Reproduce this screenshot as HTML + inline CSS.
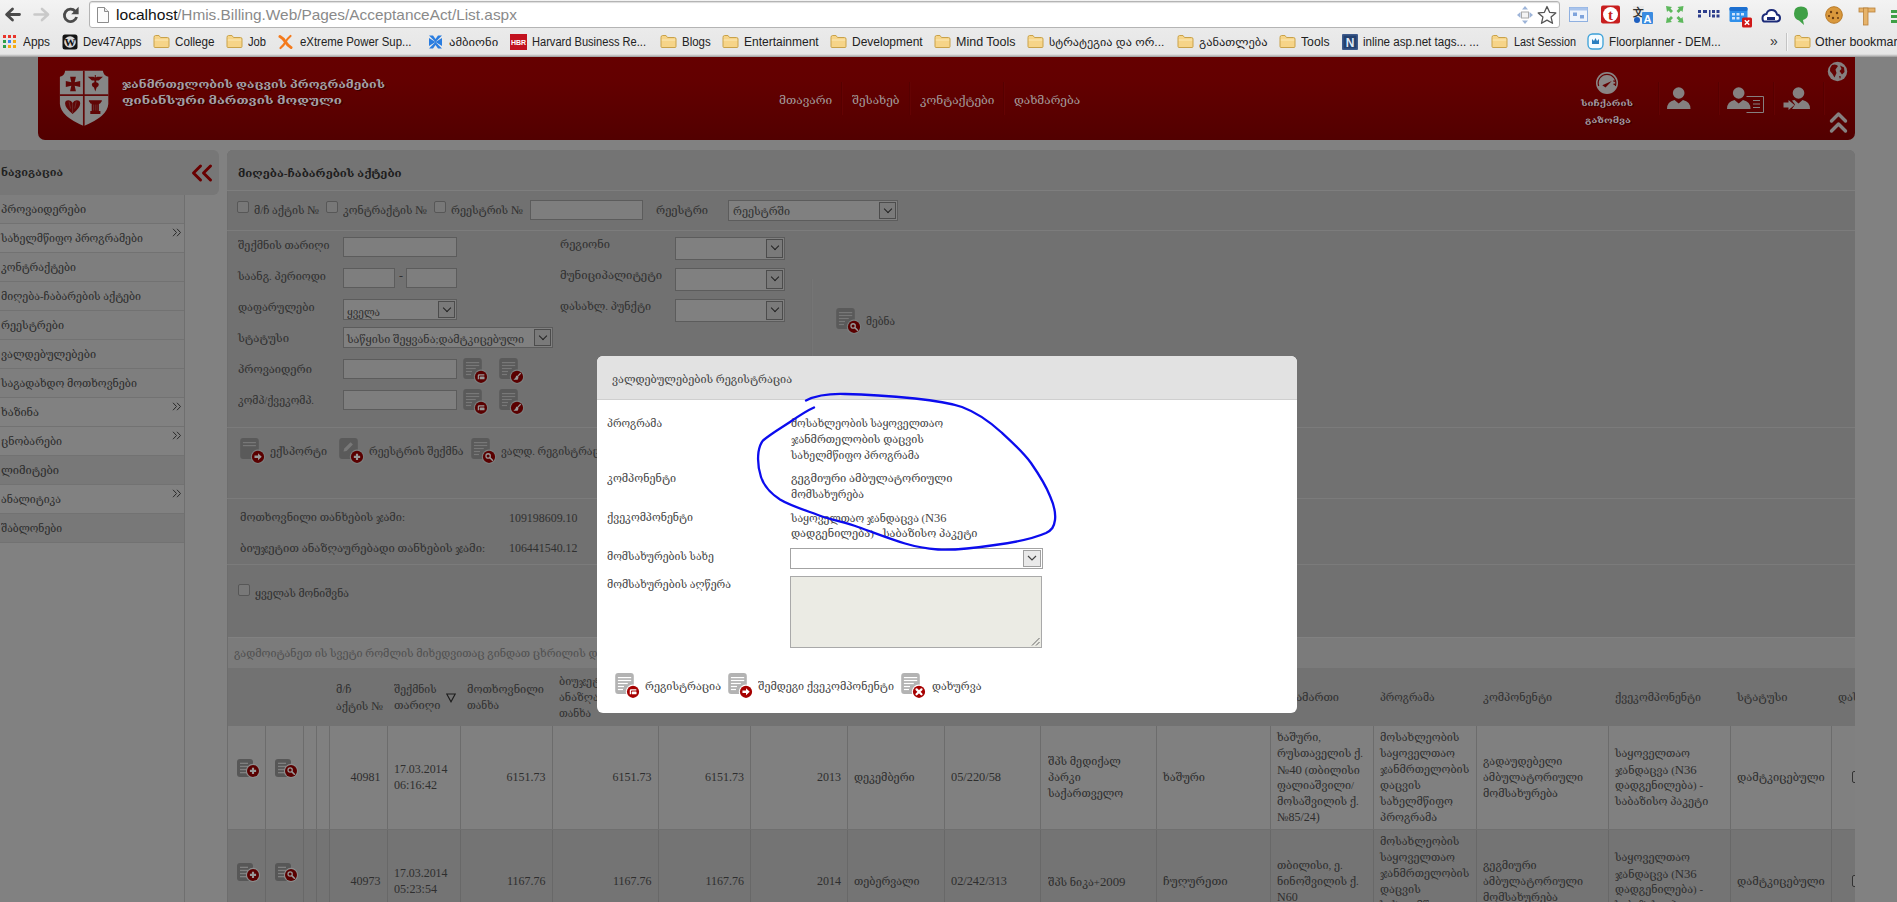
<!DOCTYPE html>
<html lang="ka">
<head>
<meta charset="utf-8">
<title>მიღება-ჩაბარების აქტები</title>
<style>
*{box-sizing:border-box}
html,body{margin:0;padding:0}
body{width:1897px;height:902px;overflow:hidden;position:relative;background:#818181;
 font-family:"Liberation Serif","DejaVu Serif",serif;font-size:12px;color:#303030}
.a{position:absolute}
.t{position:absolute;white-space:nowrap;line-height:16px;height:16px;transform-origin:0 0}
.ui{font-family:"Liberation Sans","DejaVu Sans",sans-serif}
.r{text-align:right}
.b{font-weight:bold}
#chrome{left:0;top:0;width:1897px;height:57px;background:linear-gradient(#f3f3f3 0,#ebebeb 26px,#e6e6e6 54px,#d0d0d0 55px,#9a9a9a 57px)}
#addr{left:89px;top:1px;width:1471px;height:27px;background:#fff;border:1px solid #b4b4b4;border-radius:3px;box-shadow:inset 0 1px 1px #ddd}
.bm{color:#222}
#hdr{left:38px;top:57px;width:1817px;height:83px;background:linear-gradient(#650000,#630000 30%,#520000);border-radius:0 0 7px 7px}
.hm{color:#a39b9b;font-size:13px}
.hd{width:1px;background:#560000;box-shadow:1px 0 0 #640303}
#navh{left:0;top:150px;width:219px;height:45px;background:#777;border-radius:0 6px 6px 0}
#navl{left:0;top:195px;width:185px;height:707px;border-right:1px solid #6f6f6f}
.ni{position:absolute;left:0;width:184px;height:29px;border-bottom:1px solid #727272}
#main{left:227px;top:150px;width:1628px;height:760px;background:#717171;border-radius:6px 6px 0 0;border-left:1px solid #6d6d6d}
.sep{position:absolute;left:227px;width:1628px;height:1px;background:#7b7b7b}
.in{position:absolute;border:1px solid #5c5c5c;background:#7e7e7e}
.sel{position:absolute;border:1px solid #5c5c5c;background:#808080}
.sel i{position:absolute;right:1px;top:1px;bottom:1px;width:17px;border:1px solid #4c4c4c;background:#7a7a7a}
.sel i:after{content:"";position:absolute;left:5px;top:3px;width:5px;height:5px;border-right:1px solid #222;border-bottom:1px solid #222;transform:rotate(45deg)}
.cb{position:absolute;width:12px;height:12px;border:1px solid #575757;border-radius:2px;background:#787878}
.vl{position:absolute;width:1px;background:#727272}
#modal{left:597px;top:356px;width:700px;height:357px;background:#fff;border-radius:6px;overflow:hidden}
#mh{left:0;top:0;width:700px;height:44px;background:#e2e2e2;border-bottom:1px solid #cfcfcf}
.m{color:#3a3a3a}
</style>
</head>
<body>
<div id="chrome" class="a"></div>
<svg class="a" style="left:4px;top:6px" width="80" height="18" viewBox="0 0 80 18"><path d="M15.5 8.5H3.5M8.5 3L2.6 8.5L8.5 14" fill="none" stroke="#4a4a4a" stroke-width="2.8" stroke-linecap="round" stroke-linejoin="round"/><path d="M30.5 8.5H43M38 3L44 8.5L38 14" fill="none" stroke="#c9c9c9" stroke-width="2.6" stroke-linecap="round" stroke-linejoin="round"/><path d="M71.2 5.2A6.2 6.2 0 1 0 72.6 11" fill="none" stroke="#4a4a4a" stroke-width="2.8"/><path d="M74.6 0.8V8.2H67.2Z" fill="#4a4a4a"/></svg>
<div id="addr" class="a"></div>
<svg class="a" style="left:97px;top:7px" width="12" height="16" viewBox="0 0 12 16"><path d="M.5 .5H7.5L11.5 4.5V15.5H.5Z" fill="#fcfcfc" stroke="#8c8c8c"/><path d="M7.5 .5V4.5H11.5" fill="#e8e8e8" stroke="#8c8c8c"/></svg>
<span class="t ui" style="left:115.5px;top:6px;font-size:15px;color:#111;line-height:18px;height:18px;transform:scaleX(1.039)">localhost</span>
<span class="t ui" style="left:177px;top:6px;font-size:15px;color:#8a8a8a;line-height:18px;height:18px;transform:scaleX(1.025)">/Hmis.Billing.Web/Pages/AcceptanceAct/List.aspx</span>
<svg class="a" style="left:1516px;top:5px" width="42" height="20" viewBox="0 0 42 20"><g fill="#9db4d8"><path d="M9 1L12 4.5H6Z"/><path d="M9 19L12 15.5H6Z"/><path d="M1 10L4.5 7V13Z"/><path d="M17 10L13.500 7V13Z"/></g><rect x="5.500" y="7" width="7" height="6" fill="#f4f4f4" stroke="#aaa"/><path d="M31 1.500L33.600 7.300L39.800 7.900L35.100 12.100L36.500 18.300L31 15.100L25.500 18.300L26.900 12.100L22.200 7.900L28.400 7.300Z" fill="#fdfdfd" stroke="#555" stroke-width="1.300" stroke-linejoin="round"/></svg>
<svg class="a" style="left:1566px;top:3px" width="331" height="26" viewBox="0 0 331 26"><rect x="3.500" y="4.500" width="18" height="14" fill="#eef3fb" stroke="#8fb0e0"/><rect x="3.500" y="4.500" width="18" height="3" fill="#a9c4ec"/><rect x="7" y="9.500" width="4" height="3.500" fill="#7ea3dc"/><rect x="14" y="12" width="4" height="3.500" fill="#7ea3dc"/><rect x="35" y="2.500" width="19" height="18" rx="2" fill="#c81e1e"/><circle cx="44.500" cy="11.500" r="7.500" fill="#fff"/><text x="44.500" y="16.500" font-family="Liberation Serif,serif" font-size="15" font-weight="bold" fill="#c81e1e" text-anchor="middle">t</text><rect x="67" y="3" width="11" height="12" fill="#e8e8e8"/><text x="72.500" y="13" font-family="Liberation Sans,sans-serif" font-size="11" font-weight="bold" fill="#333" text-anchor="middle">文</text><rect x="76" y="9" width="11" height="12" rx="1" fill="#3a8be0"/><text x="81.500" y="19.500" font-family="Liberation Sans,sans-serif" font-size="11" font-weight="bold" fill="#fff" text-anchor="middle">A</text><circle cx="71" cy="17" r="3" fill="#1e5fc0"/><g fill="#5db85c"><path d="M100 3L106 4L104.500 5.500L107 8L105 10L102.500 7.500L101 9Z"/><path d="M117.500 3L116.500 9L115 7.500L112.500 10L110.500 8L113 5.500L111.500 4Z"/><path d="M100 20L101 14L102.500 15.500L105 13L107 15L104.500 17.500L106 19Z"/><path d="M117.500 20L111.500 19L113 17.500L110.500 15L112.500 13L115 15.500L116.500 14Z"/></g><g fill="#2d3e8c"><rect x="132" y="7" width="3" height="3"/><rect x="137" y="7" width="4" height="3"/><rect x="143" y="7" width="1.500" height="7"/><rect x="146" y="7" width="3" height="3"/><rect x="150.500" y="7" width="3" height="3"/><rect x="132" y="11.500" width="3" height="3"/><rect x="146" y="11.500" width="3" height="3"/><rect x="150.500" y="11.500" width="3" height="3"/></g><rect x="163.500" y="4" width="18" height="15" rx="1.500" fill="#2f8fea"/><rect x="163.500" y="4" width="18" height="4" rx="1.500" fill="#1c6fd0"/><g fill="#cfe4fb"><rect x="166" y="10" width="3" height="2.500"/><rect x="170.500" y="10" width="3" height="2.500"/><rect x="175" y="10" width="3" height="2.500"/><rect x="166" y="14" width="3" height="2.500"/><rect x="170.500" y="14" width="3" height="2.500"/></g><rect x="176" y="14.500" width="10" height="10" rx="1.500" fill="#d01818"/><path d="M178.800 17.300L183.200 21.700M183.200 17.300L178.800 21.700" stroke="#fff" stroke-width="1.600"/><path d="M198 18.500H211Q214 18 214 15Q214 12 211 11.500Q210 7 205.500 7Q201.500 7 200.500 11Q196.500 11.500 196.500 15Q196.500 18 198 18.500Z" fill="#fff" stroke="#1b2a78" stroke-width="2"/><rect x="201" y="14" width="8" height="3" fill="#1b2a78"/><path d="M235 3.500Q242 3.500 242 10.500Q242 15.500 237 17L238 22L233 17.500Q228 16 228 10.500Q228 3.500 235 3.500Z" fill="#3fa046"/><circle cx="268" cy="12" r="8.300" fill="#d9983c"/><circle cx="268" cy="12" r="8.300" fill="none" stroke="#b87824" stroke-width="1"/><g fill="#6b3d12"><circle cx="265" cy="9" r="1.200"/><circle cx="271" cy="10" r="1.200"/><circle cx="267" cy="15" r="1.200"/><circle cx="272" cy="15" r="1"/><circle cx="263" cy="13" r="1"/></g><rect x="293" y="5" width="16" height="4" fill="#e6b36a" stroke="#b8803a" stroke-width=".8"/><rect x="297.500" y="5" width="4.500" height="17" fill="#e6b36a" stroke="#b8803a" stroke-width=".8"/><rect x="325" y="7" width="8" height="3" fill="#3fa046"/><rect x="325" y="12" width="8" height="3" fill="#3fa046"/><rect x="325" y="17" width="8" height="3" fill="#3fa046"/></svg>
<svg class="a" style="left:3px;top:35px" width="13" height="13" viewBox="0 0 13 13"><rect x="0" y="0" width="3" height="3" fill="#e8352b"/><rect x="5" y="0" width="3" height="3" fill="#e8352b"/><rect x="10" y="0" width="3" height="3" fill="#e8352b"/><rect x="0" y="5" width="3" height="3" fill="#2ea04a"/><rect x="5" y="5" width="3" height="3" fill="#3b86f2"/><rect x="10" y="5" width="3" height="3" fill="#f4ab12"/><rect x="0" y="10" width="3" height="3" fill="#2ea04a"/><rect x="5" y="10" width="3" height="3" fill="#f4ab12"/><rect x="10" y="10" width="3" height="3" fill="#f4ab12"/></svg>
<span class="t ui bm" style="left:23.3px;top:34px;color:#222;transform:scaleX(0.987)">Apps</span>
<svg class="a" style="left:62px;top:34px" width="16" height="16" viewBox="0 0 16 16"><rect x=".5" y=".5" width="15" height="15" rx="2.500" fill="#141414"/><circle cx="8" cy="8" r="5.800" fill="#d8d8d8"/><text x="8" y="12" font-family="Liberation Serif,serif" font-size="11" font-weight="bold" fill="#141414" text-anchor="middle">W</text></svg>
<span class="t ui bm" style="left:83.3px;top:34px;color:#222;transform:scaleX(0.941)">Dev47Apps</span>
<svg class="a" style="left:153px;top:34px" width="17" height="15" viewBox="0 0 17 15"><path d="M1 3.500Q1 1.500 2.500 1.500H6L7.500 3.500H14.500Q16 3.500 16 5V12.500Q16 13.500 15 13.500H2Q1 13.500 1 12.500Z" fill="#f6d488" stroke="#c9a24a" stroke-width="1"/><path d="M1.800 6H15.200" stroke="#fbe9b8" stroke-width="1"/></svg>
<span class="t ui bm" style="left:175.4px;top:34px;color:#222;transform:scaleX(0.973)">College</span>
<svg class="a" style="left:226px;top:34px" width="17" height="15" viewBox="0 0 17 15"><path d="M1 3.500Q1 1.500 2.500 1.500H6L7.500 3.500H14.500Q16 3.500 16 5V12.500Q16 13.500 15 13.500H2Q1 13.500 1 12.500Z" fill="#f6d488" stroke="#c9a24a" stroke-width="1"/><path d="M1.800 6H15.200" stroke="#fbe9b8" stroke-width="1"/></svg>
<span class="t ui bm" style="left:248px;top:34px;color:#222;transform:scaleX(0.930)">Job</span>
<svg class="a" style="left:278px;top:34px" width="15" height="16" viewBox="0 0 15 16"><path d="M2 2.500Q5 4 7.500 8Q10 12 13 13.500" fill="none" stroke="#f47a1c" stroke-width="3" stroke-linecap="round"/><path d="M12.500 2Q9 5 7.500 8Q6 11 2.500 14" fill="none" stroke="#f47a1c" stroke-width="2.200" stroke-linecap="round"/></svg>
<span class="t ui bm" style="left:299.6px;top:34px;color:#222;transform:scaleX(0.950)">eXtreme Power Sup...</span>
<svg class="a" style="left:428px;top:34px" width="15" height="16" viewBox="0 0 15 16"><path d="M7.500 8L1 1.500H5L7.500 5L10 1.500H14ZM7.500 8L14 14.500H10L7.500 11L5 14.500H1ZM7.500 8L1 4V12ZM7.500 8L14 4V12Z" fill="#2a7de0"/></svg>
<span class="t ui bm" style="left:449.4px;top:34px;font-size:11px;color:#222;transform:scaleX(1.149)">ამბიონი</span>
<svg class="a" style="left:510px;top:34px" width="17" height="16" viewBox="0 0 17 16"><rect width="17" height="16" fill="#c2121f"/><text x="8.500" y="11" font-family="Liberation Sans,sans-serif" font-size="7" font-weight="bold" fill="#fff" text-anchor="middle">HBR</text></svg>
<span class="t ui bm" style="left:532.4px;top:34px;color:#222;transform:scaleX(0.924)">Harvard Business Re...</span>
<svg class="a" style="left:660px;top:34px" width="17" height="15" viewBox="0 0 17 15"><path d="M1 3.500Q1 1.500 2.500 1.500H6L7.500 3.500H14.500Q16 3.500 16 5V12.500Q16 13.500 15 13.500H2Q1 13.500 1 12.500Z" fill="#f6d488" stroke="#c9a24a" stroke-width="1"/><path d="M1.800 6H15.200" stroke="#fbe9b8" stroke-width="1"/></svg>
<span class="t ui bm" style="left:682.2px;top:34px;color:#222;transform:scaleX(0.956)">Blogs</span>
<svg class="a" style="left:722px;top:34px" width="17" height="15" viewBox="0 0 17 15"><path d="M1 3.500Q1 1.500 2.500 1.500H6L7.500 3.500H14.500Q16 3.500 16 5V12.500Q16 13.500 15 13.500H2Q1 13.500 1 12.500Z" fill="#f6d488" stroke="#c9a24a" stroke-width="1"/><path d="M1.800 6H15.200" stroke="#fbe9b8" stroke-width="1"/></svg>
<span class="t ui bm" style="left:744px;top:34px;color:#222">Entertainment</span>
<svg class="a" style="left:830px;top:34px" width="17" height="15" viewBox="0 0 17 15"><path d="M1 3.500Q1 1.500 2.500 1.500H6L7.500 3.500H14.500Q16 3.500 16 5V12.500Q16 13.500 15 13.500H2Q1 13.500 1 12.500Z" fill="#f6d488" stroke="#c9a24a" stroke-width="1"/><path d="M1.800 6H15.200" stroke="#fbe9b8" stroke-width="1"/></svg>
<span class="t ui bm" style="left:852px;top:34px;color:#222">Development</span>
<svg class="a" style="left:934px;top:34px" width="17" height="15" viewBox="0 0 17 15"><path d="M1 3.500Q1 1.500 2.500 1.500H6L7.500 3.500H14.500Q16 3.500 16 5V12.500Q16 13.500 15 13.500H2Q1 13.500 1 12.500Z" fill="#f6d488" stroke="#c9a24a" stroke-width="1"/><path d="M1.800 6H15.200" stroke="#fbe9b8" stroke-width="1"/></svg>
<span class="t ui bm" style="left:956px;top:34px;color:#222;transform:scaleX(1.041)">Mind Tools</span>
<svg class="a" style="left:1027px;top:34px" width="17" height="15" viewBox="0 0 17 15"><path d="M1 3.500Q1 1.500 2.500 1.500H6L7.500 3.500H14.500Q16 3.500 16 5V12.500Q16 13.500 15 13.500H2Q1 13.500 1 12.500Z" fill="#f6d488" stroke="#c9a24a" stroke-width="1"/><path d="M1.800 6H15.200" stroke="#fbe9b8" stroke-width="1"/></svg>
<span class="t ui bm" style="left:1049.2px;top:34px;font-size:11px;color:#222;transform:scaleX(1.099)">სტრატეგია და ორ...</span>
<svg class="a" style="left:1177px;top:34px" width="17" height="15" viewBox="0 0 17 15"><path d="M1 3.500Q1 1.500 2.500 1.500H6L7.500 3.500H14.500Q16 3.500 16 5V12.500Q16 13.500 15 13.500H2Q1 13.500 1 12.500Z" fill="#f6d488" stroke="#c9a24a" stroke-width="1"/><path d="M1.800 6H15.200" stroke="#fbe9b8" stroke-width="1"/></svg>
<span class="t ui bm" style="left:1199px;top:34px;font-size:11px;color:#222;transform:scaleX(1.128)">განათლება</span>
<svg class="a" style="left:1279px;top:34px" width="17" height="15" viewBox="0 0 17 15"><path d="M1 3.500Q1 1.500 2.500 1.500H6L7.500 3.500H14.500Q16 3.500 16 5V12.500Q16 13.500 15 13.500H2Q1 13.500 1 12.500Z" fill="#f6d488" stroke="#c9a24a" stroke-width="1"/><path d="M1.800 6H15.200" stroke="#fbe9b8" stroke-width="1"/></svg>
<span class="t ui bm" style="left:1301.3px;top:34px;color:#222;transform:scaleX(1.017)">Tools</span>
<svg class="a" style="left:1342px;top:34px" width="16" height="16" viewBox="0 0 16 16"><rect width="16" height="16" rx="1" fill="#3d5a8c"/><rect x="1.500" y="1.500" width="13" height="13" fill="#23406f"/><text x="8" y="12.500" font-family="Liberation Sans,sans-serif" font-size="12" font-weight="bold" fill="#dfe8f5" text-anchor="middle">N</text></svg>
<span class="t ui bm" style="left:1363px;top:34px;color:#222;transform:scaleX(0.966)">inline asp.net tags... ...</span>
<svg class="a" style="left:1491px;top:34px" width="17" height="15" viewBox="0 0 17 15"><path d="M1 3.500Q1 1.500 2.500 1.500H6L7.500 3.500H14.500Q16 3.500 16 5V12.500Q16 13.500 15 13.500H2Q1 13.500 1 12.500Z" fill="#f6d488" stroke="#c9a24a" stroke-width="1"/><path d="M1.800 6H15.200" stroke="#fbe9b8" stroke-width="1"/></svg>
<span class="t ui bm" style="left:1513.5px;top:34px;color:#222;transform:scaleX(0.902)">Last Session</span>
<svg class="a" style="left:1587px;top:33px" width="17" height="17" viewBox="0 0 17 17"><rect x="1" y="1" width="15" height="15" rx="4.500" fill="#f4fbff" stroke="#3aa0d8" stroke-width="1.300"/><path d="M5 11V6L7 8L8.500 5L10 8L12 6V11Z" fill="#2a7fc0"/></svg>
<span class="t ui bm" style="left:1609px;top:34px;color:#222;transform:scaleX(0.974)">Floorplanner - DEM...</span>
<span class="t ui" style="left:1770px;top:33px;font-size:14px;color:#333">»</span>
<div class="a" style="left:1786px;top:33px;width:1px;height:18px;background:#c4c4c4;box-shadow:1px 0 0 #f6f6f6"></div>
<svg class="a" style="left:1794px;top:34px" width="17" height="15" viewBox="0 0 17 15"><path d="M1 3.500Q1 1.500 2.500 1.500H6L7.500 3.500H14.500Q16 3.500 16 5V12.500Q16 13.500 15 13.500H2Q1 13.500 1 12.500Z" fill="#f6d488" stroke="#c9a24a" stroke-width="1"/><path d="M1.800 6H15.200" stroke="#fbe9b8" stroke-width="1"/></svg>
<span class="t ui bm" style="left:1815px;top:34px;color:#222;transform:scaleX(1.032)">Other bookmarks</span>
<div id="hdr" class="a"></div>
<svg class="a" style="left:59px;top:70px" width="51" height="58" viewBox="0 0 51 58"><path d="M6.100 .7H43.900Q44.500 5.600 49.300 6.800V34Q48.500 46.500 24.800 55.900Q1.700 46.500 .9 34V6.800Q5.700 5.600 6.100 .7Z" fill="#868686"/><path d="M24.800 .7V55.900M.9 25.200H49.300" stroke="#620808" stroke-width="1.700"/><path d="M11.100 6.800H16.900L15.700 12.300L21.200 11.100V16.900L15.700 15.700L16.900 21.200H11.100L12.300 15.700L6.800 16.900V11.100L12.300 12.300Z" fill="#600606"/><path d="M28.800 6.800H34.500L35.800 7.600V5H36.800V7.600L38.200 6.800H43.900L39.800 10.400H37.200V12.200Q39.800 12.600 39.800 14.600Q39.800 16.600 37.600 17.600L36.300 21.600L35 17.600Q32.800 16.600 32.800 14.600Q32.800 12.600 35.400 12.200V10.400H32.900Z" fill="#600606"/><path d="M6.100 33.500Q6.100 30.200 9.500 30.200Q12.300 30.200 13.600 33Q14.900 30.200 17.700 30.200Q21.200 30.200 21.200 33.500Q21.200 38 13.600 43.900Q6.100 38 6.100 33.500Z" fill="#600606"/><path d="M13.600 33V43M10 31.500L11.500 38.500M17.200 31.500L15.700 38.500" stroke="#868686" stroke-width=".5" opacity=".6"/><path d="M29.900 30.200H42.800V31.300L40.900 33.800H39.900V41H41.400V43.900H31.300V41H32.700V33.800H31.800L29.900 31.300Z" fill="#600606"/><path d="M34.500 34.500V40.500M36.300 34.500V40.500M38.100 34.500V40.500" stroke="#868686" stroke-width=".5" opacity=".55"/></svg>
<span class="t b" style="left:122px;top:76px;font-size:10.92px;color:#a2a0a6;transform:scaleX(1.138);text-shadow:1px 1px 0 #3a0000">ჯანმრთელობის დაცვის პროგრამების</span>
<span class="t b" style="left:122px;top:92px;font-size:10.92px;color:#a2a0a6;transform:scaleX(1.217);text-shadow:1px 1px 0 #3a0000">ფინანსური მართვის მოდული</span>
<span class="t hm" style="left:778.8px;top:92px;font-size:10.98px;transform:scaleX(1.085)">მთავარი</span>
<span class="t hm" style="left:852px;top:92px;font-size:10.98px;transform:scaleX(1.068)">შესახებ</span>
<span class="t hm" style="left:919.5px;top:92px;font-size:10.98px;transform:scaleX(1.083)">კონტაქტები</span>
<span class="t hm" style="left:1014px;top:92px;font-size:10.98px;transform:scaleX(1.073)">დახმარება</span>
<div class="a hd" style="left:841px;top:82px;height:33px"></div>
<div class="a hd" style="left:909px;top:82px;height:33px"></div>
<div class="a hd" style="left:1003px;top:82px;height:33px"></div>
<div class="a hd" style="left:1658px;top:82px;height:33px"></div>
<div class="a hd" style="left:1718px;top:82px;height:33px"></div>
<div class="a hd" style="left:1773px;top:82px;height:33px"></div>
<div class="a hd" style="left:1823px;top:82px;height:33px"></div>
<svg class="a" style="left:1595px;top:71px" width="24" height="24" viewBox="-12 -12 24 24"><circle cx="0" cy="0" r="11" fill="#8a8585"/><path d="M-8.300 3A8.800 8.800 0 1 1 8.300 3" fill="none" stroke="#640404" stroke-width="1.200"/><path d="M-4.700 2.200L-1.500 4.400L4.800 -2Z" fill="#640404"/><path d="M6.300 -2.200L8.600 -1.600M6.500 1.200L8.800 1.500" stroke="#640404" stroke-width="1.300"/></svg>
<span class="t b" style="left:1581px;top:96px;font-size:7.9px;color:#a09aa0;transform:scaleX(1.241);text-shadow:1px 1px 0 #3a0000">სიჩქარის</span>
<span class="t b" style="left:1585px;top:113px;font-size:7.9px;color:#a09aa0;transform:scaleX(1.259);text-shadow:1px 1px 0 #3a0000">გაზომვა</span>
<svg class="a" style="left:1666.5px;top:87px" width="46" height="28" viewBox="0 0 46 28"><g fill="#858080"><circle cx="11.700" cy="6" r="5.800"/><path d="M0 22Q0 14.500 7.500 13L11.700 16.500L16 13Q23.500 14.500 23.500 22Z"/></g></svg>
<svg class="a" style="left:1726.5px;top:87px" width="46" height="28" viewBox="0 0 46 28"><g fill="#858080"><path d="M19.500 9.500H36.500V25.500H19.500" fill="none" stroke="#858080" stroke-width="1"/><path d="M26 13.500H33M26 17H33M26 20.500H33" stroke="#858080" stroke-width="1.200" fill="none"/><circle cx="11.700" cy="6" r="5.800"/><path d="M0 22Q0 14.500 7.500 13L11.700 16.500L16 13Q23.500 14.500 23.500 22Z"/></g></svg>
<svg class="a" style="left:1783px;top:87px" width="30" height="28" viewBox="0 0 30 28"><g fill="#858080"><circle cx="15.500" cy="6" r="5.800"/><path d="M9 22L12 17.500L9 13.500Q10 13 11.500 13L15.500 16.500L19.500 13Q27 14.500 27 22Z"/><path d="M0.500 15.500H5.500V13L11.500 18L5.500 23V20.500H0.500Z"/></g></svg>
<svg class="a" style="left:1827px;top:61px" width="21" height="21" viewBox="0 0 21 21"><circle cx="10.500" cy="10.500" r="9.700" fill="#858080"/><path d="M5 4Q9 2.500 11 5L8.500 8.500L9.500 12L7.500 16.500L5.500 13L3 10Q3 6 5 4ZM13 4.500L17 6.500L17.500 11L15 13.500L12.500 10L14.500 8ZM12 15L14 15.500L13 18Z" fill="#640404"/></svg>
<svg class="a" style="left:1829px;top:111px" width="19" height="23" viewBox="0 0 19 23"><path d="M2.500 10L9.500 3L16.500 10M2.500 20L9.500 13L16.500 20" fill="none" stroke="#858080" stroke-width="3.400" stroke-linecap="round" stroke-linejoin="round"/></svg>
<div id="navh" class="a"></div>
<span class="t b" style="left:1.3px;top:164px;font-size:10.92px;color:#222;transform:scaleX(1.009)">ნავიგაცია</span>
<svg class="a" style="left:190px;top:163px" width="24" height="20" viewBox="0 0 24 20"><path d="M10.500 3L3.500 10L10.500 17M20.500 3L13.500 10L20.500 17" fill="none" stroke="#690000" stroke-width="3" stroke-linecap="round" stroke-linejoin="round"/></svg>
<div id="navl" class="a"></div>
<div class="ni" style="top:195px;background:#7e7e7e"></div>
<span class="t" style="left:1.3px;top:202px;font-size:10.14px;color:#2c2c2c;transform:scaleX(1.078)">პროვაიდერები</span>
<div class="ni" style="top:224px;background:#828282"></div>
<span class="t" style="left:1.3px;top:231px;font-size:10.14px;color:#2c2c2c;transform:scaleX(1.042)">სახელმწიფო პროგრამები</span>
<svg class="a" style="left:172px;top:228px" width="10" height="9" viewBox="0 0 10 9"><path d="M1 .8L4.500 4.500L1 8.200M5 .8L8.500 4.500L5 8.200" fill="none" stroke="#2a2a2a" stroke-width="1"/></svg>
<div class="ni" style="top:253px;background:#7e7e7e"></div>
<span class="t" style="left:1.3px;top:260px;font-size:10.14px;color:#2c2c2c;transform:scaleX(1.044)">კონტრაქტები</span>
<div class="ni" style="top:282px;background:#7e7e7e"></div>
<span class="t" style="left:1.3px;top:289px;font-size:10.14px;color:#2c2c2c;transform:scaleX(1.049)">მიღება-ჩაბარების აქტები</span>
<div class="ni" style="top:311px;background:#7e7e7e"></div>
<span class="t" style="left:1.3px;top:318px;font-size:10.14px;color:#2c2c2c;transform:scaleX(1.069)">რეესტრები</span>
<div class="ni" style="top:340px;background:#7e7e7e"></div>
<span class="t" style="left:1.3px;top:347px;font-size:10.14px;color:#2c2c2c;transform:scaleX(1.076)">ვალდებულებები</span>
<div class="ni" style="top:369px;background:#7e7e7e"></div>
<span class="t" style="left:1.3px;top:376px;font-size:10.14px;color:#2c2c2c;transform:scaleX(1.056)">საგადახდო მოთხოვნები</span>
<div class="ni" style="top:398px;background:#818181"></div>
<span class="t" style="left:1.3px;top:405px;font-size:10.14px;color:#2c2c2c;transform:scaleX(1.086)">ხაზინა</span>
<svg class="a" style="left:172px;top:402px" width="10" height="9" viewBox="0 0 10 9"><path d="M1 .8L4.500 4.500L1 8.200M5 .8L8.500 4.500L5 8.200" fill="none" stroke="#2a2a2a" stroke-width="1"/></svg>
<div class="ni" style="top:427px;background:#818181"></div>
<span class="t" style="left:1.3px;top:434px;font-size:10.14px;color:#2c2c2c;transform:scaleX(1.054)">ცნობარები</span>
<svg class="a" style="left:172px;top:431px" width="10" height="9" viewBox="0 0 10 9"><path d="M1 .8L4.500 4.500L1 8.200M5 .8L8.500 4.500L5 8.200" fill="none" stroke="#2a2a2a" stroke-width="1"/></svg>
<div class="ni" style="top:456px;background:#787878"></div>
<span class="t" style="left:1.3px;top:463px;font-size:10.14px;color:#2c2c2c;transform:scaleX(1.099)">ლიმიტები</span>
<div class="ni" style="top:485px;background:#818181"></div>
<span class="t" style="left:1.3px;top:492px;font-size:10.14px;color:#2c2c2c;transform:scaleX(1.042)">ანალიტიკა</span>
<svg class="a" style="left:172px;top:489px" width="10" height="9" viewBox="0 0 10 9"><path d="M1 .8L4.500 4.500L1 8.200M5 .8L8.500 4.500L5 8.200" fill="none" stroke="#2a2a2a" stroke-width="1"/></svg>
<div class="ni" style="top:514px;background:#787878"></div>
<span class="t" style="left:1.3px;top:521px;font-size:10.14px;color:#2c2c2c;transform:scaleX(1.025)">შაბლონები</span>
<div id="main" class="a"></div>
<div class="a" style="left:227px;top:150px;width:1628px;height:40px;background:#747474;border-radius:6px 6px 0 0"></div>
<span class="t b" style="left:237.6px;top:165px;font-size:10.92px;color:#1e1e1e;transform:scaleX(1.049)">მიღება-ჩაბარების აქტები</span>
<div class="sep" style="top:190px;background:#7e7e7e"></div>
<div class="sep" style="top:230px;background:#7c7c7c"></div>
<div class="cb" style="left:237px;top:201px"></div>
<span class="t" style="left:254px;top:202px;font-size:10.14px;transform:scaleX(1.049)">მ/ჩ აქტის <span style="font-size:12px">№</span></span>
<div class="cb" style="left:326px;top:201px"></div>
<span class="t" style="left:343px;top:202px;font-size:10.14px;transform:scaleX(1.043)">კონტრაქტის <span style="font-size:12px">№</span></span>
<div class="cb" style="left:434px;top:201px"></div>
<span class="t" style="left:451px;top:202px;font-size:10.14px;transform:scaleX(1.066)">რეესტრის <span style="font-size:12px">№</span></span>
<div class="in" style="left:530px;top:200px;width:113px;height:20px"></div>
<span class="t" style="left:656px;top:203px;font-size:10.14px;transform:scaleX(1.096)">რეესტრი</span>
<div class="sel" style="left:728px;top:200px;width:170px;height:21px"><i></i></div>
<span class="t" style="left:733px;top:204px;font-size:10.14px;transform:scaleX(1.066)">რეესტრში</span>
<span class="t" style="left:238px;top:238px;font-size:10.14px;transform:scaleX(1.059)">შექმნის თარიღი</span>
<div class="in" style="left:343px;top:237px;width:114px;height:20px"></div>
<span class="t" style="left:238px;top:269px;font-size:10.14px;transform:scaleX(1.073)">საანგ. პერიოდი</span>
<div class="in" style="left:343px;top:268px;width:52px;height:20px"></div>
<span class="t" style="left:399px;top:268px">-</span>
<div class="in" style="left:406px;top:268px;width:51px;height:20px"></div>
<span class="t" style="left:238px;top:300px;font-size:10.14px;transform:scaleX(1.078)">დაფარულები</span>
<div class="sel" style="left:343px;top:299px;width:114px;height:21px"><i></i></div>
<span class="t" style="left:347px;top:305px;font-size:10.14px;transform:scaleX(0.990)">ყველა</span>
<span class="t" style="left:238px;top:331px;font-size:10.14px;transform:scaleX(1.117)">სტატუსი</span>
<div class="sel" style="left:343px;top:327px;width:210px;height:21px"><i></i></div>
<span class="t" style="left:347px;top:332px;font-size:10.14px;transform:scaleX(1.063)">საწყისი შეყვანა;დამტკიცებული</span>
<span class="t" style="left:238px;top:362px;font-size:10.14px;transform:scaleX(1.098)">პროვაიდერი</span>
<div class="in" style="left:343px;top:359px;width:114px;height:20px"></div>
<svg class="a" style="left:463px;top:358px" width="26" height="26" viewBox="0 0 26 26"><rect x=".2" y="0" width="18.600" height="21" rx="3" fill="#5a5a5a"/><rect x="2.900" y="4" width="13.3" height="1.200" fill="#787878"/><rect x="2.900" y="6.9" width="13.3" height="1.200" fill="#787878"/><rect x="2.900" y="9.9" width="9.9" height="1.200" fill="#787878"/><rect x="2.900" y="12.9" width="6.1" height="1.200" fill="#787878"/><rect x="2.900" y="15.9" width="5.1" height="1.200" fill="#787878"/><circle cx="18" cy="18.8" r="7.199999999999999" fill="#7a7e7e"/><circle cx="18" cy="18.8" r="6.1" fill="#5a0000"/><g transform="translate(18,18.8) scale(0.9838709677419354)"><path d="M-3.3 2.6V-1.2Q-3.3 -2.6 -1.9 -2.6H3.4V-1.3H-1.4Q-2 -1.3 -2 -0.6V2.6Z" fill="#989898"/><rect x="-1.3" y="-0.4" width="4.9" height="3" rx=".7" fill="#989898"/></g></svg>
<svg class="a" style="left:499px;top:358px" width="26" height="26" viewBox="0 0 26 26"><rect x=".2" y="0" width="18.600" height="21" rx="3" fill="#5a5a5a"/><rect x="2.900" y="4" width="13.3" height="1.200" fill="#787878"/><rect x="2.900" y="6.9" width="13.3" height="1.200" fill="#787878"/><rect x="2.900" y="9.9" width="9.9" height="1.200" fill="#787878"/><rect x="2.900" y="12.9" width="6.1" height="1.200" fill="#787878"/><rect x="2.900" y="15.9" width="5.1" height="1.200" fill="#787878"/><circle cx="18" cy="18.8" r="7.199999999999999" fill="#7a7e7e"/><circle cx="18" cy="18.8" r="6.1" fill="#5a0000"/><g transform="translate(18,18.8) scale(0.9838709677419354)"><path d="M3.4 -3.4L0.4 -0.2" stroke="#989898" stroke-width="1.3" stroke-linecap="round"/><path d="M-0.6 -1.4L1.6 0.8L0.6 3H-3.6Q-1.4 1.4 -0.6 -1.4Z" fill="#989898"/></g></svg>
<span class="t" style="left:238px;top:393px;font-size:10.14px;transform:scaleX(1.030)">კომპ/ქვეკომპ.</span>
<div class="in" style="left:343px;top:390px;width:114px;height:20px"></div>
<svg class="a" style="left:463px;top:389px" width="26" height="26" viewBox="0 0 26 26"><rect x=".2" y="0" width="18.600" height="21" rx="3" fill="#5a5a5a"/><rect x="2.900" y="4" width="13.3" height="1.200" fill="#787878"/><rect x="2.900" y="6.9" width="13.3" height="1.200" fill="#787878"/><rect x="2.900" y="9.9" width="9.9" height="1.200" fill="#787878"/><rect x="2.900" y="12.9" width="6.1" height="1.200" fill="#787878"/><rect x="2.900" y="15.9" width="5.1" height="1.200" fill="#787878"/><circle cx="18" cy="18.8" r="7.199999999999999" fill="#7a7e7e"/><circle cx="18" cy="18.8" r="6.1" fill="#5a0000"/><g transform="translate(18,18.8) scale(0.9838709677419354)"><path d="M-3.3 2.6V-1.2Q-3.3 -2.6 -1.9 -2.6H3.4V-1.3H-1.4Q-2 -1.3 -2 -0.6V2.6Z" fill="#989898"/><rect x="-1.3" y="-0.4" width="4.9" height="3" rx=".7" fill="#989898"/></g></svg>
<svg class="a" style="left:499px;top:389px" width="26" height="26" viewBox="0 0 26 26"><rect x=".2" y="0" width="18.600" height="21" rx="3" fill="#5a5a5a"/><rect x="2.900" y="4" width="13.3" height="1.200" fill="#787878"/><rect x="2.900" y="6.9" width="13.3" height="1.200" fill="#787878"/><rect x="2.900" y="9.9" width="9.9" height="1.200" fill="#787878"/><rect x="2.900" y="12.9" width="6.1" height="1.200" fill="#787878"/><rect x="2.900" y="15.9" width="5.1" height="1.200" fill="#787878"/><circle cx="18" cy="18.8" r="7.199999999999999" fill="#7a7e7e"/><circle cx="18" cy="18.8" r="6.1" fill="#5a0000"/><g transform="translate(18,18.8) scale(0.9838709677419354)"><path d="M3.4 -3.4L0.4 -0.2" stroke="#989898" stroke-width="1.3" stroke-linecap="round"/><path d="M-0.6 -1.4L1.6 0.8L0.6 3H-3.6Q-1.4 1.4 -0.6 -1.4Z" fill="#989898"/></g></svg>
<span class="t" style="left:560px;top:237px;font-size:10.14px;transform:scaleX(1.096)">რეგიონი</span>
<div class="sel" style="left:675px;top:237px;width:110px;height:23px"><i></i></div>
<span class="t" style="left:560px;top:268px;font-size:10.14px;transform:scaleX(1.117)">მუნიციპალიტეტი</span>
<div class="sel" style="left:675px;top:268px;width:110px;height:23px"><i></i></div>
<span class="t" style="left:560px;top:299px;font-size:10.14px;transform:scaleX(1.064)">დასახლ. პუნქტი</span>
<div class="sel" style="left:675px;top:299px;width:110px;height:23px"><i></i></div>
<div class="vl" style="left:811px;top:279px;height:78px;background:#6f6f6f;box-shadow:1px 0 0 #757575"></div>
<svg class="a" style="left:836px;top:308px" width="26" height="26" viewBox="0 0 26 26"><rect x=".2" y="0" width="18.600" height="21" rx="3" fill="#5a5a5a"/><rect x="2.900" y="4" width="13.3" height="1.200" fill="#787878"/><rect x="2.900" y="6.9" width="13.3" height="1.200" fill="#787878"/><rect x="2.900" y="9.9" width="9.9" height="1.200" fill="#787878"/><rect x="2.900" y="12.9" width="6.1" height="1.200" fill="#787878"/><rect x="2.900" y="15.9" width="5.1" height="1.200" fill="#787878"/><circle cx="18" cy="18.8" r="7.199999999999999" fill="#7a7e7e"/><circle cx="18" cy="18.8" r="6.1" fill="#5a0000"/><g transform="translate(18,18.8) scale(0.9838709677419354)"><circle cx="-0.9" cy="-0.9" r="2.2" fill="none" stroke="#989898" stroke-width="1.3"/><path d="M1 1L3.500 3.500" stroke="#989898" stroke-width="1.600" stroke-linecap="round"/></g></svg>
<span class="t" style="left:866px;top:314px;font-size:10.14px;transform:scaleX(1.007)">მებნა</span>
<div class="sep" style="top:427px"></div>
<svg class="a" style="left:240px;top:437.5px" width="26" height="26" viewBox="0 0 26 26"><rect x=".2" y="0" width="18.600" height="21" rx="3" fill="#5a5a5a"/><rect x="2.900" y="4" width="13" height="1.200" fill="#787878"/><rect x="2.900" y="7" width="13" height="1.200" fill="#787878"/><circle cx="18" cy="18.8" r="7.199999999999999" fill="#7a7e7e"/><circle cx="18" cy="18.8" r="6.1" fill="#5a0000"/><g transform="translate(18,18.8) scale(0.9838709677419354)"><path d="M-3.6 -1.3H0V-3.6L3.8 0L0 3.6V1.3H-3.6Z" fill="#989898"/></g></svg>
<span class="t" style="left:270px;top:444px;font-size:10.14px;transform:scaleX(1.066)">ექსპორტი</span>
<svg class="a" style="left:339px;top:437.5px" width="26" height="26" viewBox="0 0 26 26"><rect x=".2" y="0" width="18.600" height="21" rx="3" fill="#5a5a5a"/><path d="M4.500 13.500L5.300 10.600L11.600 4.300L13.900 6.600L7.600 12.900Z" fill="#787878"/><circle cx="18" cy="18.8" r="7.199999999999999" fill="#7a7e7e"/><circle cx="18" cy="18.8" r="6.1" fill="#5a0000"/><g transform="translate(18,18.8) scale(0.9838709677419354)"><path d="M-3.2 0H3.2M0 -3.2V3.2" stroke="#989898" stroke-width="2.2"/></g></svg>
<span class="t" style="left:369px;top:444px;font-size:10.14px;transform:scaleX(1.038)">რეესტრის შექმნა</span>
<svg class="a" style="left:471px;top:437.5px" width="26" height="26" viewBox="0 0 26 26"><rect x=".2" y="0" width="18.600" height="21" rx="3" fill="#5a5a5a"/><rect x="2.900" y="4" width="13.3" height="1.200" fill="#787878"/><rect x="2.900" y="6.9" width="13.3" height="1.200" fill="#787878"/><rect x="2.900" y="9.9" width="9.9" height="1.200" fill="#787878"/><rect x="2.900" y="12.9" width="6.1" height="1.200" fill="#787878"/><rect x="2.900" y="15.9" width="5.1" height="1.200" fill="#787878"/><circle cx="18" cy="18.8" r="7.199999999999999" fill="#7a7e7e"/><circle cx="18" cy="18.8" r="6.1" fill="#5a0000"/><g transform="translate(18,18.8) scale(0.9838709677419354)"><circle cx="-0.9" cy="-0.9" r="2.2" fill="none" stroke="#989898" stroke-width="1.3"/><path d="M1 1L3.500 3.500" stroke="#989898" stroke-width="1.600" stroke-linecap="round"/></g></svg>
<span class="t" style="left:501px;top:444px;font-size:10.14px;transform:scaleX(1.032)">ვალდ. რეგისტრაცია</span>
<div class="sep" style="top:498px"></div>
<span class="t" style="left:240px;top:510px;font-size:10.14px;transform:scaleX(1.080)">მოთხოვნილი თანხების ჯამი:</span>
<span class="t" style="left:508.5px;top:510px;transform:scaleX(0.993)">109198609.10</span>
<span class="t" style="left:240px;top:541px;font-size:10.14px;transform:scaleX(1.110)">ბიუჯეტით ანაზღაურებადი თანხების ჯამი:</span>
<span class="t" style="left:508.5px;top:540px;transform:scaleX(0.993)">106441540.12</span>
<div class="sep" style="top:564px"></div>
<div class="cb" style="left:237.5px;top:584px"></div>
<span class="t" style="left:255px;top:586px;font-size:10.14px;transform:scaleX(1.033)">ყველას მონიშვნა</span>
<div class="a" style="left:228px;top:637px;width:1627px;height:31px;background:#7b7b7b;border-top:1px solid #818181"></div>
<span class="t" style="left:234.4px;top:646px;font-size:10.14px;color:#505050;transform:scaleX(1.065)">გადმოიტანეთ ის სვეტი რომლის მიხედვითაც გინდათ ცხრილის დაჯგუფება</span>
<div class="a" style="left:228px;top:668px;width:1627px;height:58px;background:#727272"></div>
<span class="t" style="left:336px;top:682px;font-size:10.14px;color:#303030;transform:scaleX(1.065)">მ/ჩ</span>
<span class="t" style="left:336px;top:698px;font-size:10.14px;color:#303030;transform:scaleX(1.050)">აქტის <span style="font-size:12px">№</span></span>
<span class="t" style="left:394px;top:682px;font-size:10.14px;color:#303030;transform:scaleX(1.029)">შექმნის</span>
<span class="t" style="left:394px;top:698px;font-size:10.14px;color:#303030;transform:scaleX(1.093)">თარიღი</span>
<svg class="a" style="left:446px;top:693px" width="10" height="10" viewBox="0 0 10 10"><path d="M.8 1H9.200L5 8.800Z" fill="none" stroke="#1c1c1c" stroke-width="1.100"/></svg>
<span class="t" style="left:467px;top:682px;font-size:10.14px;color:#303030;transform:scaleX(1.080)">მოთხოვნილი</span>
<span class="t" style="left:467px;top:698px;font-size:10.14px;color:#303030;transform:scaleX(1.006)">თანხა</span>
<span class="t" style="left:559px;top:674px;font-size:10.14px;color:#303030;transform:scaleX(1.065)">ბიუჯეტით</span>
<span class="t" style="left:559px;top:690px;font-size:10.14px;color:#303030;transform:scaleX(1.065)">ანაზღაურებადი</span>
<span class="t" style="left:559px;top:706px;font-size:10.14px;color:#303030;transform:scaleX(1.006)">თანხა</span>
<span class="t" style="left:1277px;top:690px;font-size:10.14px;color:#303030;transform:scaleX(1.081)">მისამართი</span>
<span class="t" style="left:1380px;top:690px;font-size:10.14px;color:#303030;transform:scaleX(1.016)">პროგრამა</span>
<span class="t" style="left:1482.8px;top:690px;font-size:10.14px;color:#303030;transform:scaleX(1.066)">კომპონენტი</span>
<span class="t" style="left:1614.8px;top:690px;font-size:10.14px;color:#303030;transform:scaleX(1.049)">ქვეკომპონენტი</span>
<span class="t" style="left:1737px;top:690px;font-size:10.14px;color:#303030;transform:scaleX(1.110)">სტატუსი</span>
<span class="t" style="left:1838px;top:690px;font-size:10.14px;color:#303030;transform:scaleX(1.065)">დასრულება</span>
<div class="a" style="left:228px;top:726px;width:1627px;height:103px;background:#808080"></div>
<div class="a" style="left:228px;top:829px;width:1627px;height:80px;background:#747474"></div>
<div class="vl" style="left:265px;top:726px;height:103px;background:#6c6c6c"></div>
<div class="vl" style="left:265px;top:829px;height:80px;background:#686868"></div>
<div class="vl" style="left:303px;top:726px;height:103px;background:#6c6c6c"></div>
<div class="vl" style="left:303px;top:829px;height:80px;background:#686868"></div>
<div class="vl" style="left:316px;top:726px;height:103px;background:#6c6c6c"></div>
<div class="vl" style="left:316px;top:829px;height:80px;background:#686868"></div>
<div class="vl" style="left:329px;top:726px;height:103px;background:#6c6c6c"></div>
<div class="vl" style="left:329px;top:829px;height:80px;background:#686868"></div>
<div class="vl" style="left:387px;top:726px;height:103px;background:#6c6c6c"></div>
<div class="vl" style="left:387px;top:829px;height:80px;background:#686868"></div>
<div class="vl" style="left:460px;top:726px;height:103px;background:#6c6c6c"></div>
<div class="vl" style="left:460px;top:829px;height:80px;background:#686868"></div>
<div class="vl" style="left:552px;top:726px;height:103px;background:#6c6c6c"></div>
<div class="vl" style="left:552px;top:829px;height:80px;background:#686868"></div>
<div class="vl" style="left:658px;top:726px;height:103px;background:#6c6c6c"></div>
<div class="vl" style="left:658px;top:829px;height:80px;background:#686868"></div>
<div class="vl" style="left:750px;top:726px;height:103px;background:#6c6c6c"></div>
<div class="vl" style="left:750px;top:829px;height:80px;background:#686868"></div>
<div class="vl" style="left:847px;top:726px;height:103px;background:#6c6c6c"></div>
<div class="vl" style="left:847px;top:829px;height:80px;background:#686868"></div>
<div class="vl" style="left:944px;top:726px;height:103px;background:#6c6c6c"></div>
<div class="vl" style="left:944px;top:829px;height:80px;background:#686868"></div>
<div class="vl" style="left:1040px;top:726px;height:103px;background:#6c6c6c"></div>
<div class="vl" style="left:1040px;top:829px;height:80px;background:#686868"></div>
<div class="vl" style="left:1156px;top:726px;height:103px;background:#6c6c6c"></div>
<div class="vl" style="left:1156px;top:829px;height:80px;background:#686868"></div>
<div class="vl" style="left:1270px;top:726px;height:103px;background:#6c6c6c"></div>
<div class="vl" style="left:1270px;top:829px;height:80px;background:#686868"></div>
<div class="vl" style="left:1373px;top:726px;height:103px;background:#6c6c6c"></div>
<div class="vl" style="left:1373px;top:829px;height:80px;background:#686868"></div>
<div class="vl" style="left:1476px;top:726px;height:103px;background:#6c6c6c"></div>
<div class="vl" style="left:1476px;top:829px;height:80px;background:#686868"></div>
<div class="vl" style="left:1608px;top:726px;height:103px;background:#6c6c6c"></div>
<div class="vl" style="left:1608px;top:829px;height:80px;background:#686868"></div>
<div class="vl" style="left:1730px;top:726px;height:103px;background:#6c6c6c"></div>
<div class="vl" style="left:1730px;top:829px;height:80px;background:#686868"></div>
<div class="vl" style="left:1831px;top:726px;height:103px;background:#6c6c6c"></div>
<div class="vl" style="left:1831px;top:829px;height:80px;background:#686868"></div>
<div class="a" style="left:228px;top:829px;width:1627px;height:1px;background:#6f6f6f"></div>
<svg class="a" style="left:237px;top:759.0px" width="24" height="20" viewBox="0 0 24 20"><rect x="0" y="0" width="16" height="18" rx="3" fill="#575757"/><rect x="3" y="3.7" width="8" height="1.300" fill="#808080"/><rect x="3" y="6.8" width="8" height="1.300" fill="#808080"/><rect x="3" y="9.9" width="8" height="1.300" fill="#808080"/><rect x="3" y="13" width="8" height="1.300" fill="#808080"/><circle cx="16" cy="11.9" r="7.1" fill="#8b8e8e"/><circle cx="16" cy="11.9" r="6" fill="#5a0000"/><g transform="translate(16,11.9) scale(0.9677419354838709)"><path d="M-3.2 0H3.2M0 -3.2V3.2" stroke="#989898" stroke-width="2.2"/></g></svg>
<svg class="a" style="left:275px;top:759.0px" width="24" height="20" viewBox="0 0 24 20"><rect x="0" y="0" width="16" height="18" rx="3" fill="#575757"/><rect x="3" y="3.7" width="8" height="1.300" fill="#808080"/><rect x="3" y="6.8" width="8" height="1.300" fill="#808080"/><rect x="3" y="9.9" width="8" height="1.300" fill="#808080"/><rect x="3" y="13" width="8" height="1.300" fill="#808080"/><circle cx="16" cy="11.9" r="7.1" fill="#8b8e8e"/><circle cx="16" cy="11.9" r="6" fill="#5a0000"/><g transform="translate(16,11.9) scale(0.9677419354838709)"><circle cx="-0.9" cy="-0.9" r="2.2" fill="none" stroke="#989898" stroke-width="1.3"/><path d="M1 1L3.500 3.500" stroke="#989898" stroke-width="1.600" stroke-linecap="round"/></g></svg>
<span class="t" style="left:350.5px;top:769px;color:#2e2e2e">40981</span>
<span class="t" style="left:394px;top:761px;color:#2e2e2e;transform:scaleX(0.991)">17.03.2014</span>
<span class="t" style="left:394px;top:777px;color:#2e2e2e;transform:scaleX(1.008)">06:16:42</span>
<span class="t" style="left:506.5px;top:769px;color:#2e2e2e">6151.73</span>
<span class="t" style="left:612.5px;top:769px;color:#2e2e2e">6151.73</span>
<span class="t" style="left:705px;top:769px;color:#2e2e2e">6151.73</span>
<span class="t" style="left:817px;top:769px;color:#2e2e2e">2013</span>
<span class="t" style="left:854px;top:770px;font-size:10.14px;color:#2e2e2e;transform:scaleX(1.068)">დეკემბერი</span>
<span class="t" style="left:951px;top:769px;color:#2e2e2e;transform:scaleX(1.027)">05/220/58</span>
<span class="t" style="left:1047.5px;top:754px;font-size:10.14px;color:#2e2e2e;transform:scaleX(1.065)">შპს მედიქალ</span>
<span class="t" style="left:1047.5px;top:770px;font-size:10.14px;color:#2e2e2e;transform:scaleX(1.065)">პარკი</span>
<span class="t" style="left:1047.5px;top:786px;font-size:10.14px;color:#2e2e2e;transform:scaleX(1.065)">საქართველო</span>
<span class="t" style="left:1162.7px;top:770px;font-size:10.14px;color:#2e2e2e;transform:scaleX(1.084)">ხაშური</span>
<span class="t" style="left:1277px;top:730px;font-size:10.14px;color:#2e2e2e;transform:scaleX(1.065)">ხაშური,</span>
<span class="t" style="left:1277px;top:746px;font-size:10.14px;color:#2e2e2e;transform:scaleX(1.065)">რუსთაველის ქ.</span>
<span class="t" style="left:1277px;top:762px;font-size:10.14px;color:#2e2e2e;transform:scaleX(1.065)"><span style="font-size:12px">№40</span> (თბილისი</span>
<span class="t" style="left:1277px;top:778px;font-size:10.14px;color:#2e2e2e;transform:scaleX(1.065)">ფალიაშვილი/</span>
<span class="t" style="left:1277px;top:794px;font-size:10.14px;color:#2e2e2e;transform:scaleX(1.065)">მოსაშვილის ქ.</span>
<span class="t" style="left:1277px;top:809px;color:#2e2e2e">№85/24)</span>
<span class="t" style="left:1380px;top:730px;font-size:10.14px;color:#2e2e2e;transform:scaleX(1.065)">მოსახლეობის</span>
<span class="t" style="left:1380px;top:746px;font-size:10.14px;color:#2e2e2e;transform:scaleX(1.065)">საყოველთაო</span>
<span class="t" style="left:1380px;top:762px;font-size:10.14px;color:#2e2e2e;transform:scaleX(1.065)">ჯანმრთელობის</span>
<span class="t" style="left:1380px;top:778px;font-size:10.14px;color:#2e2e2e;transform:scaleX(1.065)">დაცვის</span>
<span class="t" style="left:1380px;top:794px;font-size:10.14px;color:#2e2e2e;transform:scaleX(1.065)">სახელმწიფო</span>
<span class="t" style="left:1380px;top:810px;font-size:10.14px;color:#2e2e2e;transform:scaleX(1.065)">პროგრამა</span>
<span class="t" style="left:1482.8px;top:754px;font-size:10.14px;color:#2e2e2e;transform:scaleX(1.065)">გადაუდებელი</span>
<span class="t" style="left:1482.8px;top:770px;font-size:10.14px;color:#2e2e2e;transform:scaleX(1.065)">ამბულატორიული</span>
<span class="t" style="left:1482.8px;top:786px;font-size:10.14px;color:#2e2e2e;transform:scaleX(1.065)">მომსახურება</span>
<span class="t" style="left:1614.8px;top:746px;font-size:10.14px;color:#2e2e2e;transform:scaleX(1.065)">საყოველთაო</span>
<span class="t" style="left:1614.8px;top:762px;font-size:10.14px;color:#2e2e2e;transform:scaleX(1.065)">ჯანდაცვა (<span style="font-size:12px">N36</span></span>
<span class="t" style="left:1614.8px;top:778px;font-size:10.14px;color:#2e2e2e;transform:scaleX(1.065)">დადგენილება) -</span>
<span class="t" style="left:1614.8px;top:794px;font-size:10.14px;color:#2e2e2e;transform:scaleX(1.065)">საბაზისო პაკეტი</span>
<span class="t" style="left:1737px;top:770px;font-size:10.14px;color:#2e2e2e;transform:scaleX(1.090)">დამტკიცებული</span>
<div class="cb" style="left:1851.5px;top:770.5px;border-color:#333;background:#808080"></div>
<svg class="a" style="left:237px;top:863.0px" width="24" height="20" viewBox="0 0 24 20"><rect x="0" y="0" width="16" height="18" rx="3" fill="#575757"/><rect x="3" y="3.7" width="8" height="1.300" fill="#808080"/><rect x="3" y="6.8" width="8" height="1.300" fill="#808080"/><rect x="3" y="9.9" width="8" height="1.300" fill="#808080"/><rect x="3" y="13" width="8" height="1.300" fill="#808080"/><circle cx="16" cy="11.9" r="7.1" fill="#8b8e8e"/><circle cx="16" cy="11.9" r="6" fill="#5a0000"/><g transform="translate(16,11.9) scale(0.9677419354838709)"><path d="M-3.2 0H3.2M0 -3.2V3.2" stroke="#989898" stroke-width="2.2"/></g></svg>
<svg class="a" style="left:275px;top:863.0px" width="24" height="20" viewBox="0 0 24 20"><rect x="0" y="0" width="16" height="18" rx="3" fill="#575757"/><rect x="3" y="3.7" width="8" height="1.300" fill="#808080"/><rect x="3" y="6.8" width="8" height="1.300" fill="#808080"/><rect x="3" y="9.9" width="8" height="1.300" fill="#808080"/><rect x="3" y="13" width="8" height="1.300" fill="#808080"/><circle cx="16" cy="11.9" r="7.1" fill="#8b8e8e"/><circle cx="16" cy="11.9" r="6" fill="#5a0000"/><g transform="translate(16,11.9) scale(0.9677419354838709)"><circle cx="-0.9" cy="-0.9" r="2.2" fill="none" stroke="#989898" stroke-width="1.3"/><path d="M1 1L3.500 3.500" stroke="#989898" stroke-width="1.600" stroke-linecap="round"/></g></svg>
<span class="t" style="left:350.5px;top:873px;color:#2e2e2e">40973</span>
<span class="t" style="left:394px;top:865px;color:#2e2e2e;transform:scaleX(0.991)">17.03.2014</span>
<span class="t" style="left:394px;top:881px;color:#2e2e2e;transform:scaleX(1.008)">05:23:54</span>
<span class="t" style="left:506.94px;top:873px;color:#2e2e2e">1167.76</span>
<span class="t" style="left:612.94px;top:873px;color:#2e2e2e">1167.76</span>
<span class="t" style="left:705.44px;top:873px;color:#2e2e2e">1167.76</span>
<span class="t" style="left:817px;top:873px;color:#2e2e2e">2014</span>
<span class="t" style="left:854px;top:874px;font-size:10.14px;color:#2e2e2e;transform:scaleX(1.062)">თებერვალი</span>
<span class="t" style="left:951px;top:873px;color:#2e2e2e;transform:scaleX(1.024)">02/242/313</span>
<span class="t" style="left:1047.5px;top:874px;font-size:10.14px;color:#2e2e2e;transform:scaleX(1.065)">შპს ნიკა+<span style="font-size:12px">2009</span></span>
<span class="t" style="left:1162.7px;top:874px;font-size:10.14px;color:#2e2e2e;transform:scaleX(1.132)">ჩუღურეთი</span>
<span class="t" style="left:1277px;top:858px;font-size:10.14px;color:#2e2e2e;transform:scaleX(1.065)">თბილისი, ე.</span>
<span class="t" style="left:1277px;top:874px;font-size:10.14px;color:#2e2e2e;transform:scaleX(1.065)">ნინოშვილის ქ.</span>
<span class="t" style="left:1277px;top:889px;color:#2e2e2e">N60</span>
<span class="t" style="left:1380px;top:834px;font-size:10.14px;color:#2e2e2e;transform:scaleX(1.065)">მოსახლეობის</span>
<span class="t" style="left:1380px;top:850px;font-size:10.14px;color:#2e2e2e;transform:scaleX(1.065)">საყოველთაო</span>
<span class="t" style="left:1380px;top:866px;font-size:10.14px;color:#2e2e2e;transform:scaleX(1.065)">ჯანმრთელობის</span>
<span class="t" style="left:1380px;top:882px;font-size:10.14px;color:#2e2e2e;transform:scaleX(1.065)">დაცვის</span>
<span class="t" style="left:1380px;top:898px;font-size:10.14px;color:#2e2e2e;transform:scaleX(1.065)">სახელმწიფო</span>
<span class="t" style="left:1380px;top:914px;font-size:10.14px;color:#2e2e2e;transform:scaleX(1.065)">პროგრამა</span>
<span class="t" style="left:1482.8px;top:858px;font-size:10.14px;color:#2e2e2e;transform:scaleX(1.065)">გეგმიური</span>
<span class="t" style="left:1482.8px;top:874px;font-size:10.14px;color:#2e2e2e;transform:scaleX(1.065)">ამბულატორიული</span>
<span class="t" style="left:1482.8px;top:890px;font-size:10.14px;color:#2e2e2e;transform:scaleX(1.065)">მომსახურება</span>
<span class="t" style="left:1614.8px;top:850px;font-size:10.14px;color:#2e2e2e;transform:scaleX(1.065)">საყოველთაო</span>
<span class="t" style="left:1614.8px;top:866px;font-size:10.14px;color:#2e2e2e;transform:scaleX(1.065)">ჯანდაცვა (<span style="font-size:12px">N36</span></span>
<span class="t" style="left:1614.8px;top:882px;font-size:10.14px;color:#2e2e2e;transform:scaleX(1.065)">დადგენილება) -</span>
<span class="t" style="left:1614.8px;top:898px;font-size:10.14px;color:#2e2e2e;transform:scaleX(1.065)">საბაზისო პაკეტი</span>
<span class="t" style="left:1737px;top:874px;font-size:10.14px;color:#2e2e2e;transform:scaleX(1.090)">დამტკიცებული</span>
<div class="cb" style="left:1851.5px;top:874.5px;border-color:#333;background:#808080"></div>
<div class="a" style="left:1855px;top:140px;width:42px;height:762px;background:#818181"></div>
<div id="modal" class="a"><div id="mh" class="a"></div></div>
<span class="t" style="left:612px;top:372px;font-size:10.14px;color:#454545;transform:scaleX(1.071)">ვალდებულებების რეგისტრაცია</span>
<span class="t" style="left:607px;top:416px;font-size:10.14px;color:#454545;transform:scaleX(1.025)">პროგრამა</span>
<span class="t" style="left:790.5px;top:416px;font-size:10.14px;color:#454545;transform:scaleX(1.031)">მოსახლეობის საყოველთაო</span>
<span class="t" style="left:790.5px;top:432px;font-size:10.14px;color:#454545;transform:scaleX(1.068)">ჯანმრთელობის დაცვის</span>
<span class="t" style="left:790.5px;top:448px;font-size:10.14px;color:#454545;transform:scaleX(1.031)">სახელმწიფო პროგრამა</span>
<span class="t" style="left:607px;top:471px;font-size:10.14px;color:#454545;transform:scaleX(1.066)">კომპონენტი</span>
<span class="t" style="left:790.5px;top:471px;font-size:10.14px;color:#454545;transform:scaleX(1.100)">გეგმიური ამბულატორიული</span>
<span class="t" style="left:790.5px;top:487px;font-size:10.14px;color:#454545;transform:scaleX(1.037)">მომსახურება</span>
<span class="t" style="left:607px;top:510px;font-size:10.14px;color:#454545;transform:scaleX(1.049)">ქვეკომპონენტი</span>
<span class="t" style="left:790.5px;top:510px;font-size:10.14px;color:#454545;transform:scaleX(1.039)">საყოველთაო ჯანდაცვა (<span style="font-size:12px">N36</span></span>
<span class="t" style="left:790.5px;top:526px;font-size:10.14px;color:#454545;transform:scaleX(1.080)">დადგენილება) - საბაზისო პაკეტი</span>
<span class="t" style="left:607px;top:549px;font-size:10.14px;color:#454545;transform:scaleX(1.041)">მომსახურების სახე</span>
<div class="a" style="left:790px;top:548px;width:253px;height:21px;background:#fff;border:1px solid #a3a3a3"><div class="a" style="right:1px;top:1px;width:18px;height:17px;border:1px solid #a0a0a0;background:#e9e9e9"></div><svg class="a" style="right:5px;top:6px" width="10" height="7" viewBox="0 0 10 7"><path d="M1 1L5 5L9 1" fill="none" stroke="#444" stroke-width="1.200"/></svg></div>
<span class="t" style="left:607px;top:577px;font-size:10.14px;color:#454545;transform:scaleX(1.044)">მომსახურების აღწერა</span>
<div class="a" style="left:790px;top:576px;width:252px;height:72px;background:#ebebe4;border:1px solid #a9a9a9"><svg class="a" style="right:1px;bottom:1px" width="9" height="9" viewBox="0 0 9 9"><path d="M1 8.500L8.500 1M5 8.500L8.500 5" stroke="#666" stroke-width="1"/></svg></div>
<svg class="a" style="left:615px;top:673px" width="26" height="26" viewBox="0 0 26 26"><rect x=".2" y="0" width="18.600" height="21" rx="3" fill="#b3b3b3"/><rect x="2.900" y="4" width="13.3" height="1.200" fill="#ffffff"/><rect x="2.900" y="6.9" width="13.3" height="1.200" fill="#ffffff"/><rect x="2.900" y="9.9" width="9.9" height="1.200" fill="#ffffff"/><rect x="2.900" y="12.9" width="6.1" height="1.200" fill="#ffffff"/><rect x="2.900" y="15.9" width="5.1" height="1.200" fill="#ffffff"/><circle cx="18" cy="18.8" r="7.199999999999999" fill="#ffffff"/><circle cx="18" cy="18.8" r="6.1" fill="#a60000"/><g transform="translate(18,18.8) scale(0.9838709677419354)"><path d="M-3.3 2.6V-1.2Q-3.3 -2.6 -1.9 -2.6H3.4V-1.3H-1.4Q-2 -1.3 -2 -0.6V2.6Z" fill="#ffffff"/><rect x="-1.3" y="-0.4" width="4.9" height="3" rx=".7" fill="#ffffff"/></g></svg>
<span class="t" style="left:645px;top:679px;font-size:10.14px;color:#454545;transform:scaleX(1.068)">რეგისტრაცია</span>
<svg class="a" style="left:728px;top:673px" width="26" height="26" viewBox="0 0 26 26"><rect x=".2" y="0" width="18.600" height="21" rx="3" fill="#b3b3b3"/><rect x="2.900" y="4" width="13.3" height="1.200" fill="#ffffff"/><rect x="2.900" y="6.9" width="13.3" height="1.200" fill="#ffffff"/><rect x="2.900" y="9.9" width="9.9" height="1.200" fill="#ffffff"/><rect x="2.900" y="12.9" width="6.1" height="1.200" fill="#ffffff"/><rect x="2.900" y="15.9" width="5.1" height="1.200" fill="#ffffff"/><circle cx="18" cy="18.8" r="7.199999999999999" fill="#ffffff"/><circle cx="18" cy="18.8" r="6.1" fill="#a60000"/><g transform="translate(18,18.8) scale(0.9838709677419354)"><path d="M-3.6 -1.3H0V-3.6L3.8 0L0 3.6V1.3H-3.6Z" fill="#ffffff"/></g></svg>
<span class="t" style="left:757.8px;top:679px;font-size:10.14px;color:#454545;transform:scaleX(1.063)">შემდეგი ქვეკომპონენტი</span>
<svg class="a" style="left:901px;top:673px" width="26" height="26" viewBox="0 0 26 26"><rect x=".2" y="0" width="18.600" height="21" rx="3" fill="#b3b3b3"/><rect x="2.900" y="4" width="13.3" height="1.200" fill="#ffffff"/><rect x="2.900" y="6.9" width="13.3" height="1.200" fill="#ffffff"/><rect x="2.900" y="9.9" width="9.9" height="1.200" fill="#ffffff"/><rect x="2.900" y="12.9" width="6.1" height="1.200" fill="#ffffff"/><rect x="2.900" y="15.9" width="5.1" height="1.200" fill="#ffffff"/><circle cx="18" cy="18.8" r="7.199999999999999" fill="#ffffff"/><circle cx="18" cy="18.8" r="6.1" fill="#a60000"/><g transform="translate(18,18.8) scale(0.9838709677419354)"><path d="M-2.5 -2.5L2.5 2.5M2.5 -2.5L-2.5 2.5" stroke="#ffffff" stroke-width="2.3" stroke-linecap="round"/></g></svg>
<span class="t" style="left:931.6px;top:679px;font-size:10.14px;color:#454545;transform:scaleX(1.061)">დახურვა</span>
<svg class="a" style="left:740px;top:380px" width="340" height="190" viewBox="740 380 340 190"><path d="M806 400.500C815 396 830 393.500 845 394C870 394.500 895 396.500 915 398.500C935 400.500 950 403 962 407C978 413 990 422 1001 432C1013 443 1023 452 1031 463C1040 476 1046 486 1050 496C1054 505 1056 512 1055 520C1054 527 1052 530 1046 533C1030 540 1010 543 995 545C975 548 955 550.500 938 549.500C925 548.500 915 546.500 905 543.500C890 539 875 533 858 527C845 522.500 832 520 818 515C803 509.500 790 505.500 780 499.500C770 493 764 486 761 477C758 468 757.500 460 758.500 452C759.500 446 760.500 443.500 763 440.500C772 433 781 428 790 422C798 416.500 806 411 814 407.500" fill="none" stroke="#0c0cee" stroke-width="2.300" stroke-linecap="round" stroke-linejoin="round"/></svg>
</body>
</html>
